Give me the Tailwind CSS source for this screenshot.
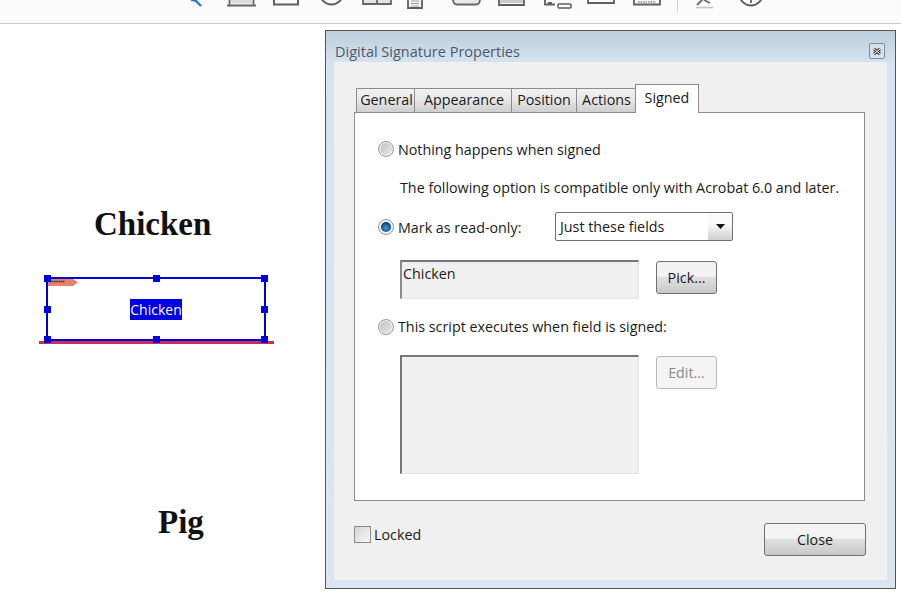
<!DOCTYPE html>
<html lang="en">
<head>
  <meta charset="UTF-8"/>
  <title>Digital Signature Properties</title>
  <script src="https://cdn.jsdelivr.net/npm/@tailwindcss/browser@4"></script>
</head>
<body class="bg-white font-['Open_Sans',sans-serif] text-[14.3px] text-[#1a1a1a] w-[901px] h-[597px] overflow-hidden relative">

<!-- Toolbar, icons cut off at the top -->
<div class="h-[24px] bg-[#fbfbfb] border-b border-[#c8c8c8] flex items-start pl-[188px] overflow-hidden text-[#5a5a5a]">
  <svg class="w-[16px] h-[8px] shrink-0" viewBox="0 0 16 8" fill="none" stroke="#1f78c8" stroke-width="2.4"><path d="M1 -3 L5 1 M9 -2 L6 1.5 M8 1 L13 6"/></svg>
  <svg class="w-[31px] h-[8px] ml-[22px] shrink-0" viewBox="0 0 31 8" fill="none"><rect x="5" y="-1" width="21" height="4.5" fill="#dcdcdc"/><path d="M3.5 -1 V5.5 M27.5 -1 V5.5 M1 5.5 H30" stroke="#666" stroke-width="1.8"/></svg>
  <svg class="w-[26px] h-[8px] ml-[16px] shrink-0" viewBox="0 0 26 8" fill="none"><path d="M1 -2 V4.5 H25 V-2" stroke="#5f5f5f" stroke-width="2"/></svg>
  <svg class="w-[25px] h-[8px] ml-[20px] shrink-0" viewBox="0 0 25 8" fill="none"><circle cx="12.5" cy="-7" r="11.5" stroke="#5f5f5f" stroke-width="2"/></svg>
  <svg class="w-[30px] h-[8px] ml-[18px] shrink-0" viewBox="0 0 30 8" fill="none"><rect x="2" y="-1" width="26" height="4" fill="#e4e4e4"/><path d="M1 -1 V4 H29 V-1 M15 -1 V4" stroke="#666" stroke-width="1.8"/></svg>
  <svg class="w-[16px] h-[10px] ml-[15px] shrink-0" viewBox="0 0 16 10" fill="none"><path d="M1 -1 V8 H15 V-1" stroke="#5f5f5f" stroke-width="1.8"/><path d="M4 1 H12 M4 3.5 H12 M4 6 H12" stroke="#9a9a9a"/></svg>
  <svg class="w-[29px] h-[8px] ml-[29px] shrink-0" viewBox="0 0 29 8" fill="none"><rect x="2" y="-1" width="25" height="4.5" fill="#e8e8e8"/><path d="M1 -1 Q1 4.5 5 4.5 H24 Q28 4.5 28 -1" stroke="#666" stroke-width="1.8"/></svg>
  <svg class="w-[27px] h-[8px] ml-[17px] shrink-0" viewBox="0 0 27 8" fill="none"><rect x="2" y="-1" width="23" height="4" fill="#c9c9c9"/><path d="M1 -1 V5 H26 V-1" stroke="#5f5f5f" stroke-width="1.8"/></svg>
  <svg class="w-[28px] h-[10px] ml-[19px] shrink-0" viewBox="0 0 28 10" fill="none"><path d="M1 -1 V4.5 H11 M4 3 H8" stroke="#5f5f5f" stroke-width="1.8"/><rect x="14" y="4" width="13" height="4" rx="1" stroke="#5f5f5f" stroke-width="1.6"/></svg>
  <svg class="w-[28px] h-[8px] ml-[15px] shrink-0" viewBox="0 0 28 8" fill="none"><path d="M1 -1 V3 H27 V-1" stroke="#5f5f5f" stroke-width="1.8"/></svg>
  <svg class="w-[28px] h-[8px] ml-[18px] shrink-0" viewBox="0 0 28 8" fill="none"><path d="M1 -1 V4.5 H27 V-1" stroke="#5f5f5f" stroke-width="1.8"/><path d="M5 2 H23" stroke="#888" stroke-width="1.6" stroke-dasharray="1.5 1"/></svg>
  <div class="w-px h-[12px] bg-[#cfcfcf] ml-[16px] shrink-0"></div>
  <svg class="w-[20px] h-[9px] ml-[17px] shrink-0" viewBox="0 0 20 9" fill="none"><path d="M2 5 L8 -1" stroke="#6a6a6a" stroke-width="1.8"/><path d="M9 0 L15 3" stroke="#6a6a6a" stroke-width="1.8"/><path d="M1 7.5 H18" stroke="#c4c4c4" stroke-width="1.6"/></svg>
  <svg class="w-[26px] h-[8px] ml-[23px] shrink-0" viewBox="0 0 26 8" fill="none"><circle cx="13" cy="-6" r="11.5" stroke="#5f5f5f" stroke-width="2"/><path d="M13 -1 V3" stroke="#5f5f5f" stroke-width="1.8"/></svg>
</div>

<!-- PDF page contents -->
<p class="absolute left-[94px] top-[204px] font-['Liberation_Serif',serif] font-bold text-[33px] leading-[40px] text-[#111]">Chicken</p>
<div class="absolute left-[39px] top-[341px] w-[235px] h-[3px] bg-[#c92f55]"></div>
<div class="absolute left-[46px] top-[277px] w-[220px] h-[64px] border-2 border-[#0000d8] flex items-center justify-center">
  <svg class="absolute left-[0px] top-[0px] w-[30px] h-[7px]" viewBox="0 0 30 7"><path d="M0 0 H25 L30 3.5 L25 7 H0 Z" fill="#e8806e"/><path d="M2 2.5 H17" stroke="#333" stroke-width="1.4" stroke-dasharray="1.5 .6"/></svg>
  <span class="bg-[#0000e0] text-white h-[21px] w-[52px] leading-[21px] text-center text-[14px]">Chicken</span>
  <i class="absolute -left-[4px] -top-[4px] w-[7px] h-[7px] bg-[#0000d8]"></i>
  <i class="absolute left-[105px] -top-[4px] w-[7px] h-[7px] bg-[#0000d8]"></i>
  <i class="absolute -right-[4px] -top-[4px] w-[7px] h-[7px] bg-[#0000d8]"></i>
  <i class="absolute -left-[4px] top-[27px] w-[7px] h-[7px] bg-[#0000d8]"></i>
  <i class="absolute -right-[4px] top-[27px] w-[7px] h-[7px] bg-[#0000d8]"></i>
  <i class="absolute -left-[4px] -bottom-[4px] w-[7px] h-[7px] bg-[#0000d8]"></i>
  <i class="absolute left-[105px] -bottom-[4px] w-[7px] h-[7px] bg-[#0000d8]"></i>
  <i class="absolute -right-[4px] -bottom-[4px] w-[7px] h-[7px] bg-[#0000d8]"></i>
</div>
<p class="absolute left-[158px] top-[502px] font-['Liberation_Serif',serif] font-bold text-[33px] leading-[40px] text-[#111]">Pig</p>

<!-- Dialog window -->
<div class="absolute left-[325px] top-[30px] w-[571px] h-[559px] border border-[#555] bg-[linear-gradient(#bccfdc,#d6e3f0_32px,#dbe6f2)] pt-[1px] px-[8px] pb-[8px] flex flex-col">
  <div class="h-[30px] pt-[8px] flex items-center justify-between pr-[3px] shrink-0">
    <span class="text-[14.5px] text-[#4d5a66] pl-[1px] pt-[2px]">Digital Signature Properties</span>
    <div class="w-[16px] h-[16px] rounded-[2px] border border-[#7d8a9c] bg-[#d7e1ec] flex items-center justify-center -mr-[1px]">
      <svg class="w-[10px] h-[9px]" viewBox="0 0 10 9"><path d="M2 2 L8 7 M8 2 L2 7" stroke="#444" stroke-width="3"/><path d="M2 2 L8 7 M8 2 L2 7" stroke="#eef2f6" stroke-width="1"/></svg>
    </div>
  </div>

  <div class="flex-1 bg-[#f0f0f0] px-[20px] pt-[22px] flex flex-col">
    <!-- Tabs -->
    <div class="flex items-end h-[28px] pl-[2px] shrink-0 relative z-10">
      <div class="h-[24px] w-[59px] pl-[2px] border border-b-0 border-[#8c8c8c] bg-[linear-gradient(#f2f2f2,#e8e8e8_45%,#cfcfcf)] text-center leading-[22px]">General</div>
      <div class="h-[24px] w-[97px] pl-[2px] border border-l-0 border-b-0 border-[#8c8c8c] bg-[linear-gradient(#f2f2f2,#e8e8e8_45%,#cfcfcf)] text-center leading-[22px]">Appearance</div>
      <div class="h-[24px] w-[65px] border border-l-0 border-b-0 border-[#8c8c8c] bg-[linear-gradient(#f2f2f2,#e8e8e8_45%,#cfcfcf)] text-center leading-[22px]">Position</div>
      <div class="h-[24px] w-[59px] pl-[1px] border border-l-0 border-b-0 border-[#8c8c8c] bg-[linear-gradient(#f2f2f2,#e8e8e8_45%,#cfcfcf)] text-center leading-[22px]">Actions</div>
      <div class="h-[29px] w-[64px] -ml-px -mb-px border border-b-0 border-[#8c8c8c] bg-white text-center leading-[26px]">Signed</div>
    </div>

    <!-- Signed tab panel -->
    <div class="h-[389px] w-[511px] border border-[#8c8c8c] bg-white pl-[23px] pt-[28px] shrink-0">
      <label class="flex items-center h-[16px] gap-[4px]">
        <span class="w-[16px] h-[16px] rounded-full border border-[#9a9a9a] shadow-[inset_0_0_0_1px_#f2f2f2] bg-[linear-gradient(135deg,#bdbdbd,#ececec)] shrink-0"></span>
        <span class="pt-[2px]">Nothing happens when signed</span>
      </label>
      <p class="ml-[22px] mt-[21px] h-[20px] leading-[20px]">The following option is compatible only with Acrobat 6.0 and later.</p>

      <div class="flex items-center h-[30px] mt-[14px]">
        <span class="w-[16px] h-[16px] rounded-full border border-[#8d98a4] bg-[#f2f4f7] flex items-center justify-center shrink-0">
          <span class="w-[10px] h-[10px] rounded-full bg-[radial-gradient(circle_at_50%_60%,#3fa0e0,#0f3f6e_70%)]"></span>
        </span>
        <span class="ml-[4px] w-[157px] pt-[2px]">Mark as read-only:</span>
        <div class="w-[178px] h-[29px] rounded-[2px] border border-[#707070] flex -mt-[2px]">
          <span class="flex-1 pl-[4px] leading-[28px]">Just these fields</span>
          <span class="w-[24px] bg-[linear-gradient(#fafafa_40%,#cfcfcf)] flex items-center justify-center">
            <svg class="w-[9px] h-[5px]" viewBox="0 0 9 5"><path d="M0 0 H9 L4.5 5 Z" fill="#111"/></svg>
          </span>
        </div>
      </div>

      <div class="flex items-start ml-[22px] mt-[18px]">
        <div class="w-[239px] h-[39px] bg-[#f0f0f0] border-t-2 border-l-2 border-t-[#777] border-l-[#8a8a8a] border-b border-r border-[#e2e2e2] pl-[1px] leading-[24px]">Chicken</div>
        <button class="w-[61px] h-[33px] ml-[17px] mt-[1px] rounded-[3px] border border-[#707070] bg-[linear-gradient(#f2f2f2_45%,#e0e0e0_50%,#c8c8c8)]">Pick...</button>
      </div>

      <label class="flex items-center h-[16px] gap-[4px] mt-[20px]">
        <span class="w-[16px] h-[16px] rounded-full border border-[#9a9a9a] shadow-[inset_0_0_0_1px_#f2f2f2] bg-[linear-gradient(135deg,#bdbdbd,#ececec)] shrink-0"></span>
        <span>This script executes when field is signed:</span>
      </label>

      <div class="flex items-start ml-[22px] mt-[20px]">
        <div class="w-[239px] h-[119px] bg-[#f0f0f0] border-t-2 border-l-2 border-t-[#777] border-l-[#777] border-b border-r border-[#e2e2e2]"></div>
        <button class="w-[61px] h-[33px] ml-[17px] mt-[1px] rounded-[3px] border border-[#b8b8b8] bg-[#f4f4f4] text-[#8a8a8a]">Edit...</button>
      </div>
    </div>

    <!-- Footer -->
    <div class="flex justify-between items-start pt-[22px]">
      <label class="flex items-center gap-[3px] h-[17px] mt-[3px]">
        <span class="w-[17px] h-[17px] border border-[#8a8a8a] bg-[linear-gradient(135deg,#d4d4d4,#f8f8f8)]"></span>
        <span>Locked</span>
      </label>
      <button class="w-[102px] h-[33px] rounded-[3px] border border-[#707070] bg-[linear-gradient(#f4f4f4_45%,#e0e0e0_50%,#c8c8c8)] mr-px">Close</button>
    </div>
  </div>
</div>

</body>
</html>
